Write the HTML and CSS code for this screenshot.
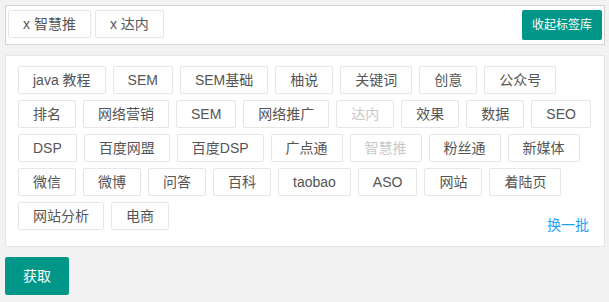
FILE: index.html
```html
<!DOCTYPE html>
<html>
<head>
    <meta charset="UTF-8">
    <title>标签库</title>
    <link rel="stylesheet" href="styles.css">
</head>
<body>
    <div class="selected-bar">
        <div class="selected-tags">
            <span class="tag">x 智慧推</span>
            <span class="tag">x 达内</span>
        </div>
        <button class="btn btn-sm">收起标签库</button>
    </div>

    <div class="tag-panel">
        <div class="tag-list">
            <span class="tag">java 教程</span>
            <span class="tag">SEM</span>
            <span class="tag">SEM基础</span>
            <span class="tag">柚说</span>
            <span class="tag">关键词</span>
            <span class="tag">创意</span>
            <span class="tag">公众号</span>
            <span class="tag">排名</span>
            <span class="tag">网络营销</span>
            <span class="tag">SEM</span>
            <span class="tag">网络推广</span>
            <span class="tag disabled">达内</span>
            <span class="tag">效果</span>
            <span class="tag">数据</span>
            <span class="tag">SEO</span>
            <span class="tag">DSP</span>
            <span class="tag">百度网盟</span>
            <span class="tag">百度DSP</span>
            <span class="tag">广点通</span>
            <span class="tag disabled">智慧推</span>
            <span class="tag">粉丝通</span>
            <span class="tag">新媒体</span>
            <span class="tag">微信</span>
            <span class="tag">微博</span>
            <span class="tag">问答</span>
            <span class="tag">百科</span>
            <span class="tag">taobao</span>
            <span class="tag">ASO</span>
            <span class="tag">网站</span>
            <span class="tag">着陆页</span>
            <span class="tag">网站分析</span>
            <span class="tag">电商</span>
            <a class="refresh" href="#">换一批</a>
        </div>
    </div>

    <button class="btn">获取</button>
</body>
</html>
```

FILE: styles.css
```css
body {
    margin: 5px 4px 5px 5px;
    font-family: "Liberation Sans", "Noto Sans CJK SC", sans-serif;
    font-size: 14px;
    background-color: #f2f2f2;
    color: #555;
}

.selected-bar {
    display: flex;
    justify-content: space-between;
    align-items: flex-start;
    padding: 4px 2px;
    background-color: #fff;
    border: 1px solid #d2d2d2;
}

.selected-tags {
    display: flex;
    gap: 4px;
}

.tag {
    display: inline-block;
    height: 26px;
    line-height: 26px;
    padding: 0 14px;
    border: 1px solid #e6e6e6;
    border-radius: 2px;
    background-color: #fff;
    color: #555;
    white-space: nowrap;
}

.tag.disabled {
    color: #c9c9c9;
}

.btn {
    display: inline-block;
    height: 38px;
    line-height: 38px;
    padding: 0 18px;
    border: none;
    border-radius: 2px;
    background-color: #009688;
    color: #fff;
    font-family: inherit;
    font-size: 14px;
    cursor: pointer;
}

.btn-sm {
    height: 30px;
    line-height: 30px;
    padding: 0 10px;
    font-size: 12px;
}

.tag-panel {
    margin: 10px 0;
    padding: 10px 8px 16px 12px;
    background-color: #fff;
    border: 1px solid #e6e6e6;
}

.tag-list {
    display: flex;
    flex-wrap: wrap;
    gap: 6px 7px;
}

.refresh {
    margin-left: auto;
    margin-right: 7px;
    margin-bottom: -5px;
    align-self: flex-end;
    line-height: 20px;
    color: #1e9fff;
    text-decoration: none;
}
```
